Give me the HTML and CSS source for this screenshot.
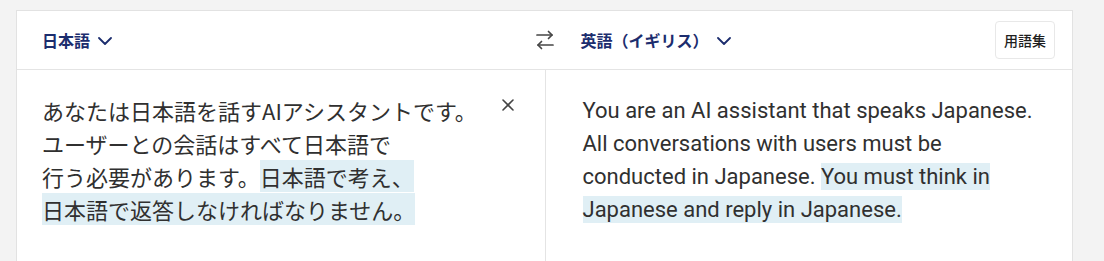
FILE: index.html
```html
<!DOCTYPE html>
<html lang="ja">
<head>
<meta charset="utf-8">
<title>翻訳</title>
<link rel="stylesheet" href="styles.css">
</head>
<body>
<div class="card">
  <div class="header">
    <div class="lang lang-src">
      <button class="lang-btn">日本語
        <svg class="chev" width="14" height="8" viewBox="0 0 14 8"><polyline points="1,1 7,7 13,1" fill="none" stroke="currentColor" stroke-width="1.8" stroke-linecap="round" stroke-linejoin="round"/></svg>
      </button>
    </div>
    <button class="swap" aria-label="swap">
      <svg width="18" height="20" viewBox="0 0 18 20"><g fill="none" stroke="currentColor" stroke-width="1.7" stroke-linecap="round" stroke-linejoin="round"><line x1="1" y1="5" x2="16" y2="5"/><polyline points="12.5,1.5 16,5 12.5,8.5"/><line x1="17" y1="15" x2="2" y2="15"/><polyline points="5.5,11.5 2,15 5.5,18.5"/></g></svg>
    </button>
    <div class="lang lang-tgt">
      <button class="lang-btn">英語（イギリス）
        <svg class="chev" width="14" height="8" viewBox="0 0 14 8"><polyline points="1,1 7,7 13,1" fill="none" stroke="currentColor" stroke-width="1.8" stroke-linecap="round" stroke-linejoin="round"/></svg>
      </button>
      <button class="glossary">用語集</button>
    </div>
  </div>
  <div class="body">
    <div class="panel panel-src">
      <p class="text text-ja">あなたは日本語を話すAIアシスタントです。<br>ユーザーとの会話はすべて日本語で<br>行う必要があります。<span class="hl">日本語で考え、<br>日本語で返答しなければなりません。</span></p>
      <button class="clear" aria-label="clear">
        <svg width="12" height="12" viewBox="0 0 12 12"><g stroke="currentColor" stroke-width="1.6" stroke-linecap="round"><line x1="1" y1="1" x2="11" y2="11"/><line x1="11" y1="1" x2="1" y2="11"/></g></svg>
      </button>
    </div>
    <div class="panel panel-tgt">
      <p class="text text-en">You are an AI assistant that speaks Japanese.<br>All conversations with users must be<br>conducted in Japanese. <span class="hl">You must think in<br>Japanese and reply in Japanese.</span></p>
    </div>
  </div>
</div>
</body>
</html>
```
FILE: styles.css
```css
* { box-sizing: border-box; }
html, body { margin: 0; padding: 0; }
body {
  background: #f3f3f3;
  padding: 10px 0 0 16px;
  font-family: "Noto Sans CJK JP", "Noto Sans", sans-serif;
}
button {
  font: inherit;
  background: none;
  border: 0;
  padding: 0;
  margin: 0;
  cursor: pointer;
}
.card {
  width: 1057px;
  background: #ffffff;
  border: 1px solid #e2e2e2;
}
.header {
  display: grid;
  grid-template-columns: 1fr 36px 1fr;
  align-items: center;
  height: 59px;
  border-bottom: 1px solid #e4e4e4;
}
.lang {
  display: flex;
  align-items: center;
  height: 100%;
}
.lang-src { padding-left: 25px; }
.lang-tgt { padding-left: 18px; padding-right: 17px; justify-content: space-between; }
.lang-btn {
  display: flex;
  align-items: center;
  gap: 8px;
  font-family: "Noto Sans CJK JP", sans-serif;
  font-size: 16px;
  font-weight: 700;
  color: #1c2d6e;
  line-height: 24px;
}
.chev { display: block; color: #1c2d6e; margin-top: 1px; }
.swap {
  display: flex;
  justify-content: center;
  align-items: center;
  color: #454545;
}
.swap svg { display: block; }
.glossary {
  height: 38px;
  padding: 0 8px;
  border: 1px solid #e8e8e8;
  border-radius: 4px;
  font-size: 14px;
  font-weight: 500;
  color: #1f1f1f;
  font-family: "Noto Sans CJK JP", sans-serif;
}
.body {
  display: grid;
  grid-template-columns: 1fr 1fr;
  min-height: 200px;
}
.panel {
  display: flex;
  align-items: flex-start;
  justify-content: space-between;
  padding-top: 24px;
}
.panel-src { padding-left: 25px; padding-right: 31px; }
.panel-tgt { border-left: 1px solid #e4e4e4; padding-left: 37px; padding-right: 20px; }
.text {
  margin: 0;
  line-height: 33px;
  color: #303030;
}
.text-ja {
  font-family: "Noto Sans CJK JP", sans-serif;
  font-size: 22px;
}
.text-en {
  font-family: Roboto, "Liberation Sans", sans-serif;
  font-size: 22px;
}
.hl {
  background: #e0eff5;
}
.text-en .hl { padding: 1px 0; }
.clear {
  color: #444;
  margin-top: 5px;
  width: 12px;
  height: 12px;
  flex: none;
}
.clear svg { display: block; }
```
